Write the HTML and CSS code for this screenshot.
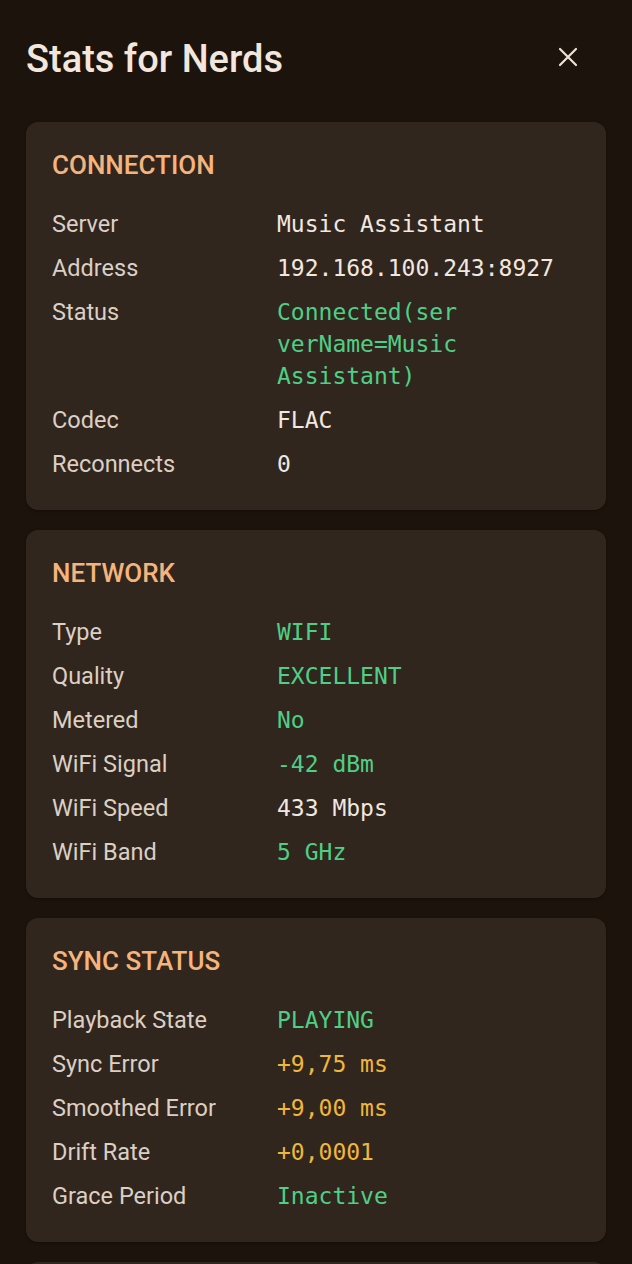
FILE: index.html
```html
<!DOCTYPE html>
<html>

<head>
  <meta charset="UTF-8">
  <title>Stats for Nerds</title>
  <link rel="stylesheet" href="styles.css">
</head>

<body>
  <div class="sheet">
    <div class="top-bar">
      <h1 class="title">Stats for Nerds</h1>
      <button class="close-btn" aria-label="Close">
        <svg width="20" height="20" viewBox="0 0 20 20">
          <path d="M2 2 L18 18 M18 2 L2 18" stroke="#eee2d8" stroke-width="2.2" stroke-linecap="round" fill="none" />
        </svg>
      </button>
    </div>

    <div class="card">
      <h2 class="card-title">CONNECTION</h2>
      <div class="row"><span class="label">Server</span><span class="value">Music Assistant</span></div>
      <div class="row"><span class="label">Address</span><span class="value">192.168.100.243:8927</span></div>
      <div class="row"><span class="label">Status</span><span class="value good wrap">Connected(serverName=Music Assistant)</span></div>
      <div class="row"><span class="label">Codec</span><span class="value">FLAC</span></div>
      <div class="row"><span class="label">Reconnects</span><span class="value">0</span></div>
    </div>

    <div class="card">
      <h2 class="card-title">NETWORK</h2>
      <div class="row"><span class="label">Type</span><span class="value good">WIFI</span></div>
      <div class="row"><span class="label">Quality</span><span class="value good">EXCELLENT</span></div>
      <div class="row"><span class="label">Metered</span><span class="value good">No</span></div>
      <div class="row"><span class="label">WiFi Signal</span><span class="value good">-42 dBm</span></div>
      <div class="row"><span class="label">WiFi Speed</span><span class="value">433 Mbps</span></div>
      <div class="row"><span class="label">WiFi Band</span><span class="value good">5 GHz</span></div>
    </div>

    <div class="card">
      <h2 class="card-title">SYNC STATUS</h2>
      <div class="row"><span class="label">Playback State</span><span class="value good">PLAYING</span></div>
      <div class="row"><span class="label">Sync Error</span><span class="value warn">+9,75 ms</span></div>
      <div class="row"><span class="label">Smoothed Error</span><span class="value warn">+9,00 ms</span></div>
      <div class="row"><span class="label">Drift Rate</span><span class="value warn">+0,0001</span></div>
      <div class="row"><span class="label">Grace Period</span><span class="value good">Inactive</span></div>
    </div>

    <div class="card"></div>
  </div>
</body>

</html>
```

FILE: styles.css
```css
html,
body {
  margin: 0;
  padding: 0;
  background-color: #1c130c;
  height: 1264px;
  overflow: hidden;
}

.sheet {
  padding: 0 26px;
  display: flex;
  flex-direction: column;
  gap: 20px;
  font-family: Roboto, "Liberation Sans", sans-serif;
}

.top-bar {
  height: 102px;
  display: flex;
  justify-content: space-between;
  align-items: flex-start;
}

.title {
  margin: 35px 0 0 0;
  font-size: 38px;
  line-height: 48px;
  font-weight: 500;
  color: #f3e7dd;
}

.close-btn {
  margin: 47px 28px 0 0;
  padding: 0;
  border: none;
  background: none;
  width: 20px;
  height: 20px;
  display: block;
}

.card {
  background-color: #30261e;
  border-radius: 12px;
  padding: 27px 26px 30px 26px;
  display: flex;
  flex-direction: column;
  gap: 12px;
  min-height: 60px;
  box-shadow: 0 1px 3px rgba(0, 0, 0, 0.35);
}

.card-title {
  margin: 0 0 15px 0;
  font-size: 26px;
  line-height: 32px;
  font-weight: 500;
  color: #f6b47d;
}

.row {
  display: flex;
  align-items: flex-start;
}

.label {
  width: 225px;
  flex-shrink: 0;
  font-size: 23.5px;
  line-height: 32px;
  color: #dccfc4;
}

.value {
  font-family: "DejaVu Sans Mono", "Liberation Mono", monospace;
  font-size: 23px;
  line-height: 32px;
  color: #f1e8e0;
}

.wrap {
  width: 13ch;
  overflow-wrap: anywhere;
}

.good {
  color: #4fcf86;
}

.warn {
  color: #f0b73c;
}
```
